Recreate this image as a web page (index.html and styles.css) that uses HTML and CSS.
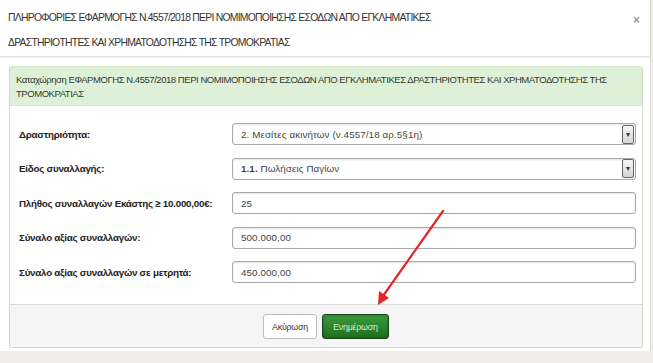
FILE: index.html
```html
<!DOCTYPE html>
<html lang="el">
    <head>
        <meta charset="UTF-8">
        <meta name="viewport" content="width=device-width, initial-scale=1.0">
        <title>Πληροφορίες εφαρμογής</title>
        <link rel="stylesheet" href="styles.css">
    </head>
    <body>
        <div class="modal">
            <div class="modal-header">
                <h4 class="modal-title">ΠΛΗΡΟΦΟΡΙΕΣ ΕΦΑΡΜΟΓΗΣ Ν.4557/2018 ΠΕΡΙ ΝΟΜΙΜΟΠΟΙΗΣΗΣ ΕΣΟΔΩΝ ΑΠΟ ΕΓΚΛΗΜΑΤΙΚΕΣ<br>ΔΡΑΣΤΗΡΙΟΤΗΤΕΣ ΚΑΙ ΧΡΗΜΑΤΟΔΟΤΗΣΗΣ ΤΗΣ ΤΡΟΜΟΚΡΑΤΙΑΣ</h4>
                <button class="close">×</button>
            </div>
            <div class="modal-body">
                <div class="panel">
                    <div class="panel-heading">Καταχώρηση ΕΦΑΡΜΟΓΗΣ Ν.4557/2018 ΠΕΡΙ ΝΟΜΙΜΟΠΟΙΗΣΗΣ ΕΣΟΔΩΝ ΑΠΟ ΕΓΚΛΗΜΑΤΙΚΕΣ ΔΡΑΣΤΗΡΙΟΤΗΤΕΣ ΚΑΙ ΧΡΗΜΑΤΟΔΟΤΗΣΗΣ ΤΗΣ ΤΡΟΜΟΚΡΑΤΙΑΣ</div>
                    <div class="panel-body">
                        <div class="form-row">
                            <label>Δραστηριότητα:</label>
                            <div class="field select">
                                <span>2. Μεσίτες ακινήτων (ν.4557/18 αρ.5§1η)</span>
                                <span class="caret">▾</span>
                            </div>
                        </div>
                        <div class="form-row">
                            <label>Είδος συναλλαγής:</label>
                            <div class="field select">
                                <span><b>1.1.</b> Πωλήσεις Παγίων</span>
                                <span class="caret">▾</span>
                            </div>
                        </div>
                        <div class="form-row">
                            <label>Πλήθος συναλλαγών Εκάστης ≥ 10.000,00€:</label>
                            <div class="field">25</div>
                        </div>
                        <div class="form-row">
                            <label>Σύναλο αξίας συναλλαγών:</label>
                            <div class="field">500.000,00</div>
                        </div>
                        <div class="form-row">
                            <label>Σύναλο αξίας συναλλαγών σε μετρητά:</label>
                            <div class="field">450.000,00</div>
                        </div>
                    </div>
                    <div class="panel-footer">
                        <button class="btn">Ακύρωση</button>
                        <button class="btn btn-success">Ενημέρωση</button>
                    </div>
                </div>
            </div>
        </div>
        <svg class="pointer" width="653" height="363" viewBox="0 0 653 363">
            <line x1="443" y1="211" x2="383" y2="296" stroke="#e3262b" stroke-width="2.2" stroke-linecap="round"/>
            <polygon points="378,305 379,291 389,298" fill="#e3262b"/>
        </svg>
    </body>
</html>
```
FILE: styles.css
```css
*,*::before,*::after{
    margin: 0;
    padding: 0;
    box-sizing: border-box;
}
body{
    width: 653px;
    height: 363px;
    overflow: hidden;
    position: relative;
    background: #efeee8;
    font-family: "Liberation Sans", Arial, sans-serif;
    color: #333;
}
.modal{
    width: 651px;
    height: 351px;
    background: #fff;
    border-right: 1px solid #dcdcd6;
}
.modal-header{
    display: flex;
    justify-content: space-between;
    height: 57px;
    padding: 5px 8px 0 8px;
    border-bottom: 1px solid #e2e2e2;
    box-shadow: 0 1px 1px rgba(0,0,0,0.05);
}
.modal-title{
    font-size: 10.4px;
    font-weight: normal;
    line-height: 25px;
    letter-spacing: -0.75px;
    color: #333;
}
.close{
    border: none;
    background: none;
    font-family: inherit;
    font-size: 12px;
    font-weight: bold;
    color: #999;
    height: 22px;
    margin-top: 4px;
    margin-right: 2px;
}
.modal-body{
    padding: 9px 8px 0 9px;
}
.panel{
    border: 1px solid #d0d8c8;
    border-top-color: #d6e9c6;
    border-radius: 3px;
    width: 634px;
    height: 282px;
    display: flex;
    flex-direction: column;
}
.panel-heading{
    background: #dff0d8;
    border-bottom: 1px solid #d6e9c6;
    padding: 6px 8px 4px 6px;
    font-size: 9.5px;
    line-height: 14px;
    letter-spacing: -0.45px;
    color: #2f3b2c;
}
.panel-body{
    flex: 1;
    display: flex;
    flex-direction: column;
    gap: 12.6px;
    padding: 17px 6px 0 9px;
}
.form-row{
    display: grid;
    grid-template-columns: 213px 1fr;
    align-items: center;
}
.form-row label{
    font-size: 9.8px;
    font-weight: bold;
    letter-spacing: -0.25px;
    color: #222;
}
.field{
    height: 22px;
    border: 1px solid #a9a9a9;
    border-radius: 3px;
    box-shadow: inset 0 1px 2px rgba(0,0,0,0.12);
    padding: 0 8px;
    display: flex;
    align-items: center;
    font-size: 9.8px;
    letter-spacing: 0.1px;
    color: #444;
}
.select{
    justify-content: space-between;
    padding-right: 1px;
}
.caret{
    width: 12px;
    height: 19px;
    border: 1px solid #666;
    border-radius: 2px;
    background: linear-gradient(#f6f6f6, #d4d4d4);
    font-size: 8px;
    color: #333;
    display: flex;
    align-items: center;
    justify-content: center;
}
.panel-footer{
    height: 43px;
    background: #f5f5f5;
    border-top: 1px solid #d8d8d8;
    display: flex;
    justify-content: center;
    align-items: center;
    gap: 5px;
    padding-top: 1px;
}
.btn{
    height: 25px;
    padding: 0 8px;
    font-family: inherit;
    font-size: 8.8px;
    letter-spacing: -0.2px;
    color: #333;
    background: #fff;
    border: 1px solid #bdbdbd;
    border-radius: 3px;
}
.btn-success{
    width: 67px;
    color: #d8eed4;
    background: linear-gradient(#3b9a3b, #1f6f21);
    border: 1px solid #17471a;
    box-shadow: inset 0 0 3px rgba(0,0,0,0.3);
}
.pointer{
    position: absolute;
    left: 0;
    top: 0;
    pointer-events: none;
}
```
